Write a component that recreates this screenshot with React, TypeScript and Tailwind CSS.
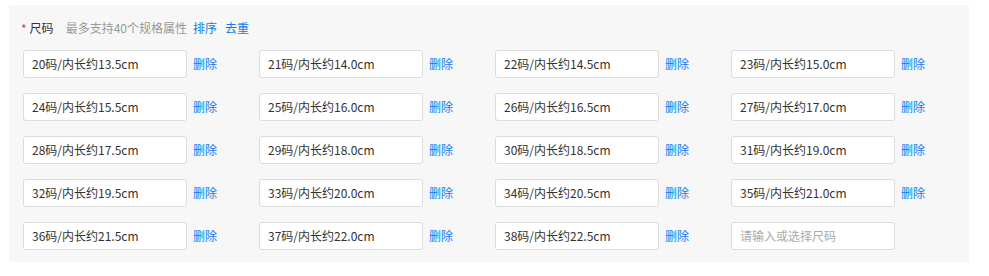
import React from "react";

const sizes = [
  "20码/内长约13.5cm",
  "21码/内长约14.0cm",
  "22码/内长约14.5cm",
  "23码/内长约15.0cm",
  "24码/内长约15.5cm",
  "25码/内长约16.0cm",
  "26码/内长约16.5cm",
  "27码/内长约17.0cm",
  "28码/内长约17.5cm",
  "29码/内长约18.0cm",
  "30码/内长约18.5cm",
  "31码/内长约19.0cm",
  "32码/内长约19.5cm",
  "33码/内长约20.0cm",
  "34码/内长约20.5cm",
  "35码/内长约21.0cm",
  "36码/内长约21.5cm",
  "37码/内长约22.0cm",
  "38码/内长约22.5cm",
];

export default function App() {
  return (
    <div
      className="w-[989px] h-[276px] bg-white pt-[5px] pl-[9px]"
      style={{ fontFamily: '"Microsoft YaHei", "Noto Sans CJK SC", "Noto Sans", sans-serif' }}
    >
      <div className="w-[960px] h-[257px] bg-[#f7f7f7] pt-[13px]">
        <div className="flex items-center h-[20px] pl-[12px] text-[12px]">
          <span className="text-[#e4393c] mr-[3px] mt-[2px]">*</span>
          <span className="text-[#333]">尺码</span>
          <span className="text-[#999] ml-[12px]">最多支持40个规格属性</span>
          <span className="text-[#0a7cf2] ml-[6px] cursor-pointer">排序</span>
          <span className="text-[#0a7cf2] ml-[8px] cursor-pointer">去重</span>
        </div>
        <div className="grid grid-cols-[236px_236px_236px_236px] gap-y-[15px] pl-[14px] mt-[12px]">
          {sizes.map((s) => (
            <div key={s} className="flex items-center h-[28px]">
              <div className="w-[164px] h-[28px] bg-white border border-[#dcdcdc] rounded-[3px] flex items-center pl-[8px] text-[12px] text-[#333]">
                {s}
              </div>
              <span className="ml-[6px] text-[12px] text-[#0a7cf2] cursor-pointer">删除</span>
            </div>
          ))}
          <div className="flex items-center h-[28px]">
            <div className="w-[164px] h-[28px] bg-white border border-[#dcdcdc] rounded-[3px] flex items-center pl-[8px] text-[12px] text-[#aaa]">
              请输入或选择尺码
            </div>
          </div>
        </div>
      </div>
    </div>
  );
}
